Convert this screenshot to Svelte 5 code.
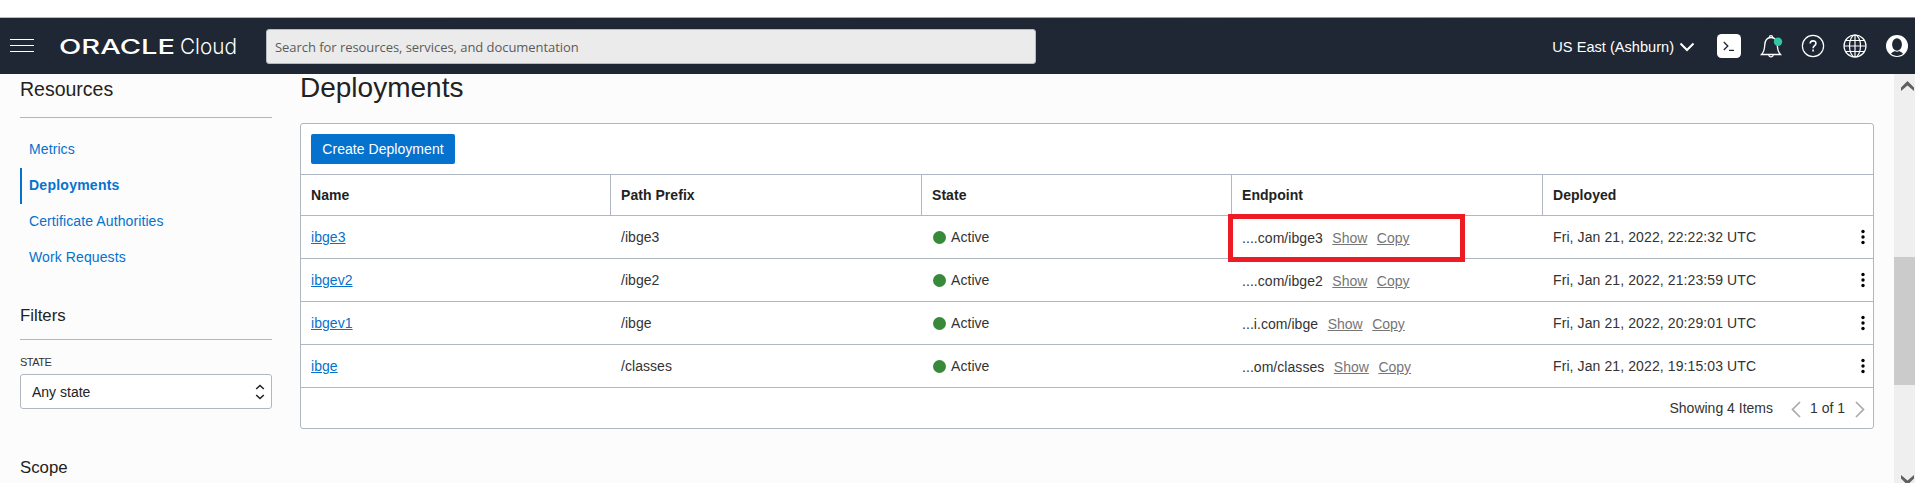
<script>
  const nav = ['Metrics', 'Deployments', 'Certificate Authorities', 'Work Requests'];
  const active = 'Deployments';
  const columns = ['Name', 'Path Prefix', 'State', 'Endpoint', 'Deployed'];
  const rows = [
    { name: 'ibge3', path: '/ibge3', end: '....com/ibge3', date: 'Fri, Jan 21, 2022, 22:22:32 UTC', marked: true },
    { name: 'ibgev2', path: '/ibge2', end: '....com/ibge2', date: 'Fri, Jan 21, 2022, 21:23:59 UTC' },
    { name: 'ibgev1', path: '/ibge', end: '...i.com/ibge', date: 'Fri, Jan 21, 2022, 20:29:01 UTC' },
    { name: 'ibge', path: '/classes', end: '...om/classes', date: 'Fri, Jan 21, 2022, 19:15:03 UTC' }
  ];
</script>

<div class="page">
  <div class="strip"></div>
  <header>
    <div class="burger"><i></i><i></i><i></i></div>
    <svg class="logo" width="180" height="40" viewBox="0 0 180 40">
      <text class="brand" x="-1" y="28" textLength="116" lengthAdjust="spacingAndGlyphs">ORACLE</text>
      <text class="cloud" x="120" y="28" textLength="57" lengthAdjust="spacingAndGlyphs">Cloud</text>
    </svg>
    <div class="search">Search for resources, services, and documentation</div>
    <div class="tools">
      <div class="region">
        <span>US East (Ashburn)</span>
        <svg width="16" height="10" viewBox="0 0 16 10"><path d="M1.500 1.500 8 8l6.500-6.500" fill="none" stroke="#fff" stroke-width="2" /></svg>
      </div>
      <svg class="shell" width="24" height="24" viewBox="0 0 24 24">
        <rect width="24" height="24" rx="4.500" fill="#fff" />
        <path d="M6.800 8l4 4-4 4M12 16.300h5" fill="none" stroke="#1e2733" stroke-width="1.300" />
      </svg>
      <svg class="icon" width="24" height="24" viewBox="0 0 24 24">
        <path d="M2.500 20.500h19c-2.200-2.200-3-4.800-3.200-9C18.100 6.500 16 3.500 12 3.500S5.900 6.500 5.700 11.500c-.2 4.200-1 6.800-3.200 9z" fill="none" stroke="#fff" stroke-width="1.300" />
        <path d="M10.300 3.400a1.700 1.700 0 1 1 3.400 0M9.800 20.700c.3 3 4.100 3 4.400 0" fill="none" stroke="#fff" stroke-width="1.200" />
        <circle cx="19" cy="7.800" r="4.200" fill="#34c5a5" />
      </svg>
      <svg class="icon" width="24" height="24" viewBox="0 0 24 24">
        <circle cx="12" cy="12" r="10.600" fill="none" stroke="#fff" stroke-width="1.200" />
        <path d="M9.200 9.600c0-3.700 5.700-3.600 5.700-.2 0 2.200-2.800 2.200-2.800 4.800M12.100 15.600v2" fill="none" stroke="#fff" stroke-width="1.600" />
      </svg>
      <svg class="icon" width="24" height="24" viewBox="0 0 24 24">
        <g fill="none" stroke="#fff" stroke-width="1.200">
          <circle cx="12" cy="12" r="11" /><ellipse cx="12" cy="12" rx="5.500" ry="11" />
          <path d="M12 1v22M1 12h22M2.800 6.500h18.400M2.800 17.500h18.400" />
        </g>
      </svg>
      <svg class="icon" width="24" height="24" viewBox="0 0 24 24">
        <circle cx="12" cy="12" r="11" fill="#fff" />
        <ellipse cx="12" cy="10.500" rx="4.900" ry="6.200" fill="#1e2733" />
        <path d="M6 19.800c1-1.800 3-1.800 3.800-2.700.8.700 3.600.7 4.400 0 .8.900 2.800.9 3.800 2.700-3.400 2.800-8.600 2.800-12 0z" fill="#1e2733" />
      </svg>
    </div>
  </header>
  <div class="body">
    <aside>
      <h2>Resources</h2>
      <nav>
        {#each nav as item}
          <a class:active={item === active}>{item}</a>
        {/each}
      </nav>
      <h3>Filters</h3>
      <div class="label">STATE</div>
      <div class="select">
        <span>Any state</span>
        <svg width="10" height="16" viewBox="0 0 10 16"><path d="M1.200 5 5 1.500 8.800 5M1.200 11 5 14.500 8.800 11" fill="none" stroke="#222" stroke-width="1.600" /></svg>
      </div>
      <h3 class="scope">Scope</h3>
    </aside>
    <main>
      <h1>Deployments</h1>
      <section>
        <div class="actions"><button>Create Deployment</button></div>
        <div class="row head">
          {#each columns as column}<div class="cell">{column}</div>{/each}
        </div>
        {#each rows as row}
          <div class="row">
            <div class="cell"><a class="link">{row.name}</a></div>
            <div class="cell">{row.path}</div>
            <div class="cell state"><i class="dot"></i>Active</div>
            <div class="cell endpoint">
              <span>{row.end}</span><u>Show</u><u>Copy</u>
              {#if row.marked}<b class="mark"></b>{/if}
            </div>
            <div class="cell last">
              <span>{row.date}</span>
              <svg width="4" height="16" viewBox="0 0 4 16"><circle cx="2" cy="2.500" r="1.700" /><circle cx="2" cy="8" r="1.700" /><circle cx="2" cy="13.500" r="1.700" /></svg>
            </div>
          </div>
        {/each}
        <footer>
          <span>Showing 4 Items</span>
          <svg class="prev" width="10" height="17" viewBox="0 0 10 17"><path d="M9 1 1.500 8.500 9 16" /></svg>
          <span>1 of 1</span>
          <svg class="next" width="10" height="17" viewBox="0 0 10 17"><path d="M1 1l7.500 7.500L1 16" /></svg>
        </footer>
      </section>
    </main>
    <div class="scrollbar">
      <svg width="13" height="10" viewBox="0 0 13 10"><path d="M0 6.500 6.500 0 13 6.500V10L6.500 4.500 0 10z" fill="#606060" /></svg>
      <div class="thumb"></div>
      <svg width="13" height="10" viewBox="0 0 13 10"><path d="M0 3.500 6.500 10 13 3.500V0L6.500 5.500 0 0z" fill="#606060" /></svg>
    </div>
  </div>
</div>

<style>
  :global(body) { margin: 0; overflow: hidden; }
  * { box-sizing: border-box; }
  .page { width: 1915px; height: 483px; overflow: hidden; background: #fcfcfc; color: #333; font: 14px/20px "Liberation Sans", Arial, sans-serif; display: flex; flex-direction: column; }
  svg { display: block; flex: none; }
  .strip { flex: none; height: 18px; background: #fff; border-bottom: 1px solid; border-image: linear-gradient(90deg, #a6d85a, #6bb3a4 60%, #4a90e2) 1; }
  header { flex: none; height: 56px; background: #1e2733; display: flex; align-items: center; padding-left: 10px; }
  .burger { width: 24px; height: 13px; display: flex; flex-direction: column; justify-content: space-between; margin-top: -1px; }
  .burger i { height: 1px; background: #fff; }
  .logo { margin-left: 26px; }
  .logo text { fill: #fff; }
  .brand { font: 500 20.500px Inter, sans-serif; }
  .cloud { font: 300 22px Inter, sans-serif; }
  .search { margin-left: 26px; width: 770px; height: 35px; border: 1px solid #b4bac6; border-radius: 3px; background: #ebebeb; color: #5b5b5b; font: 13px/34px "Open Sans", sans-serif; letter-spacing: -.05px; padding-left: 8px; }
  .tools { margin-left: auto; display: flex; align-items: center; padding-right: 6px; }
  .region { display: flex; align-items: center; gap: 5px; color: #fff; font-size: 14.600px; margin: 1px 22px 0 0; }
  .icon { margin-left: 18px; }
  .body { flex: 1; min-height: 0; display: flex; }
  aside { width: 252px; margin-left: 20px; flex: none; }
  h1, h2, h3 { font-weight: 400; margin: 0; color: #222; }
  h2 { font-size: 19.500px; line-height: 30px; height: 44px; border-bottom: 1px solid #b0b7c3; }
  nav { padding-top: 14px; display: flex; flex-direction: column; letter-spacing: .1px; }
  nav a { height: 36px; line-height: 35px; padding-left: 7px; border-left: 2px solid transparent; color: #0572ce; }
  nav a.active { font-weight: 700; border-color: #0572ce; letter-spacing: .25px; }
  h3 { font-size: 16.800px; line-height: 22px; }
  aside > h3 { margin-top: 29px; height: 35px; border-bottom: 1px solid #b0b7c3; }
  .label { font-size: 11px; letter-spacing: -.5px; line-height: 14px; margin-top: 15px; }
  .select { margin-top: 5px; height: 35px; border: 1px solid #b0b7c3; border-radius: 3px; background: #fff; display: flex; justify-content: space-between; align-items: center; padding: 0 6px 0 11px; color: #222; }
  aside > h3.scope { margin-top: 48px; border: 0; }
  main { flex: 1; margin-left: 28px; }
  h1 { font-size: 28px; line-height: 28px; }
  section { margin-top: 21px; width: 1574px; height: 306px; border: 1px solid #b0b7c3; border-radius: 3px; background: #fff; }
  .actions { height: 50px; padding: 10px 0 0 10px; }
  button { width: 144px; height: 30px; border: 0; border-radius: 2px; background: #0572ce; color: #fff; font: inherit; padding: 0; letter-spacing: .04px; }
  .row { display: grid; grid-template-columns: 309px 311px 310px 311px 331px; height: 43px; border-top: 1px solid #b0b7c3; letter-spacing: .05px; }
  .cell { padding-left: 10px; display: flex; align-items: center; }
  .head { height: 41px; font-weight: 700; color: #222; }
  .head .cell + .cell { border-left: 1px solid #b0b7c3; }
  .row:not(.head) .cell + .cell { padding-left: 11px; }
  .row:not(.head) .cell.state { padding-left: 12px; }
  .link { color: #0572ce; text-decoration: underline; }
  .dot { width: 13px; height: 13px; border-radius: 50%; background: #368a3a; margin-right: 5px; }
  .endpoint { position: relative; padding-top: 2px; }
  .endpoint u { margin-left: 9.500px; color: #767676; letter-spacing: 0; }
  .mark { position: absolute; left: -3px; top: -2px; width: 237px; height: 48px; border: 5px solid #ed1c24; }
  .last { justify-content: space-between; padding-right: 8px; letter-spacing: .1px; }
  footer { height: 41px; border-top: 1px solid #b0b7c3; display: flex; align-items: center; justify-content: flex-end; padding-right: 8px; }
  footer path { fill: none; stroke: #aaa; stroke-width: 1.700; }
  .prev { margin: 3px 9px 0 18px; }
  .next { margin: 3px 0 0 10px; }
  .scrollbar { width: 21px; flex: none; background: #efefef; display: flex; flex-direction: column; align-items: flex-end; padding: 7px 1px 0 0; }
  .thumb { flex: none; width: 21px; height: 128px; margin: 166px -1px 90px 0; background: #cbcbcb; }
</style>
